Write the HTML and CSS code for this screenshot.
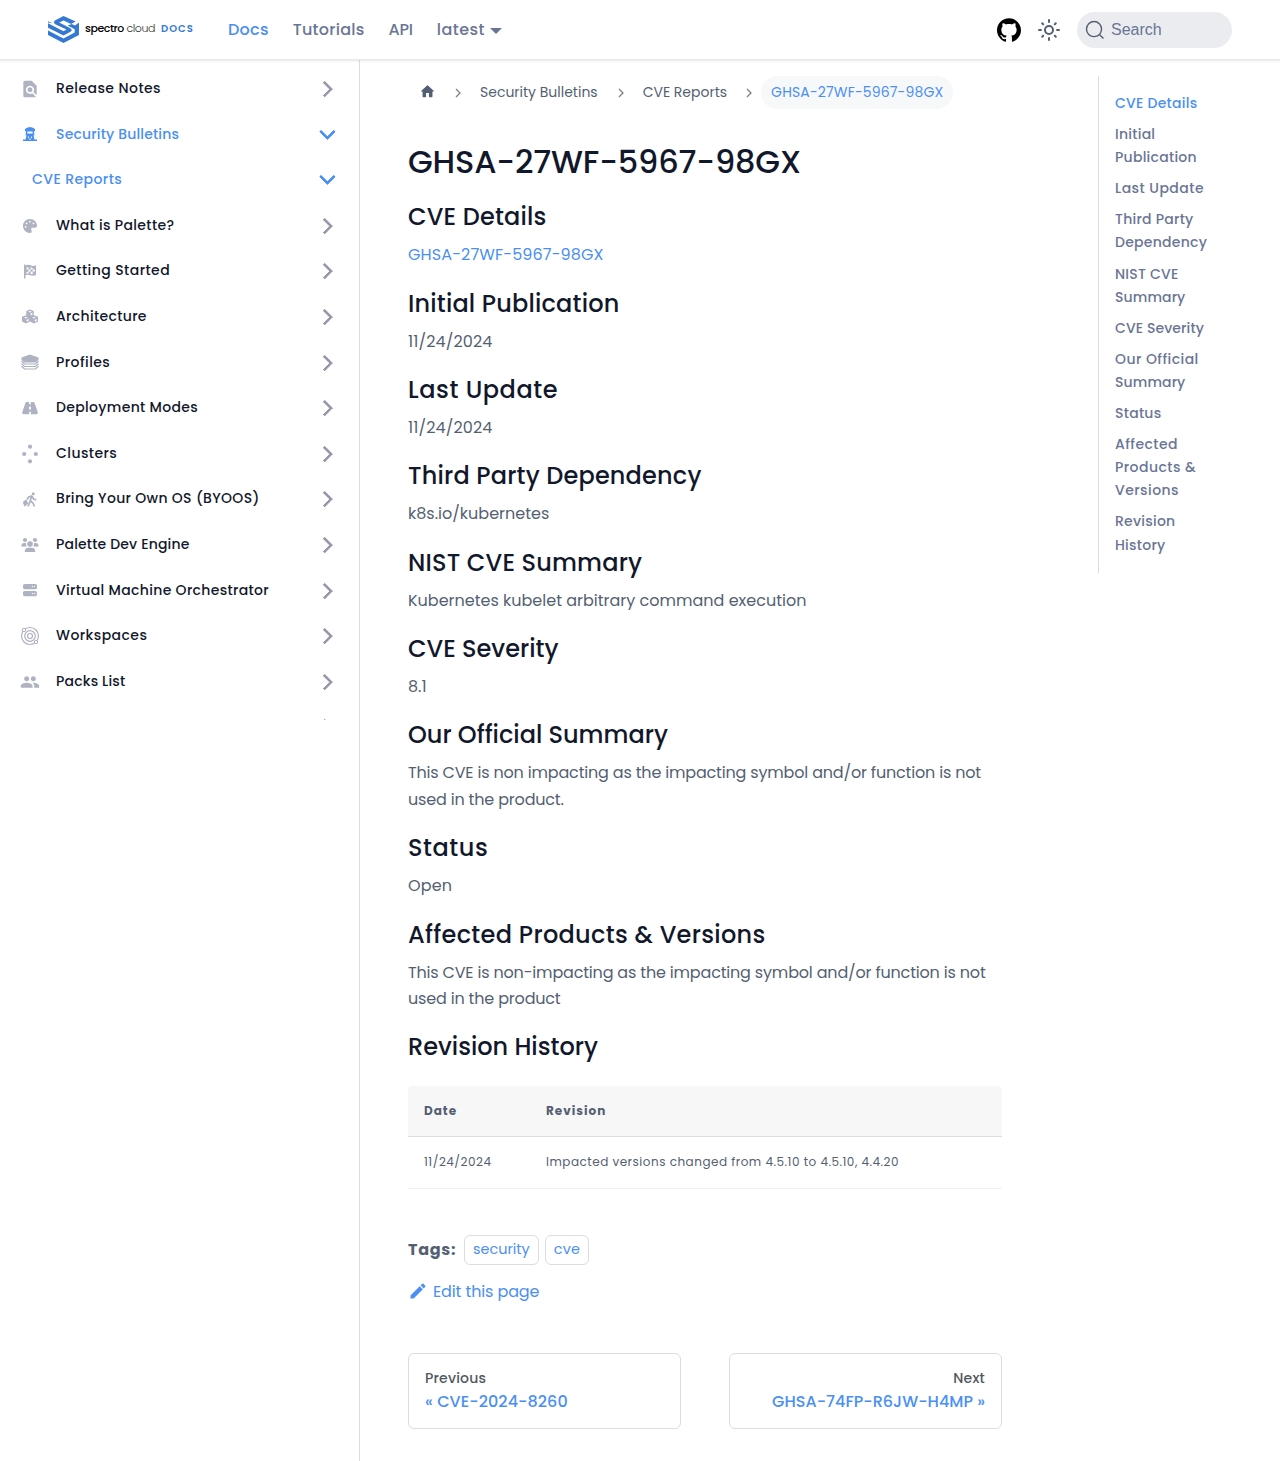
FILE: index.html
```html
<!DOCTYPE html>
<html lang="en">
<head>
<meta charset="utf-8">
<title>GHSA-27WF-5967-98GX | Spectro Cloud Docs</title>
<link rel="stylesheet" href="styles.css">
</head>
<body>
<header class="navbar">
  <a class="brand">
    <svg class="brand-mark" viewBox="0 0 94 82"><path fill="#3578d4" d="M47 0 84 17 70 24 47 14 34 20 68 37Q76 43 68 48L47 59 0 36V22L47 46 56 41 22 25Q14 19 22 13ZM0 16 14 22 0 20ZM94 20V58L47 82 0 58V44L47 68 81 50V40L60 29 72 24 82 29Z"/></svg>
    <span class="brand-name"><b>spectro</b> cloud</span><span class="brand-docs">DOCS</span>
  </a>
  <nav class="nav-links"><a class="active">Docs</a><a>Tutorials</a><a class="tight">API</a><a class="version">latest</a><i class="caret"></i></nav>
  <div class="nav-tools">
    <svg class="github" viewBox="0 0 24 24"><path d="M12 .297c-6.63 0-12 5.373-12 12 0 5.303 3.438 9.8 8.205 11.385.6.113.82-.258.82-.577 0-.285-.01-1.04-.015-2.04-3.338.724-4.042-1.61-4.042-1.61C4.422 18.07 3.633 17.7 3.633 17.7c-1.087-.744.084-.729.084-.729 1.205.084 1.838 1.236 1.838 1.236 1.07 1.835 2.809 1.305 3.495.998.108-.776.417-1.305.76-1.605-2.665-.3-5.466-1.332-5.466-5.93 0-1.31.465-2.38 1.235-3.22-.135-.303-.54-1.523.105-3.176 0 0 1.005-.322 3.3 1.23.96-.267 1.98-.399 3-.405 1.02.006 2.04.138 3 .405 2.28-1.552 3.285-1.23 3.285-1.23.645 1.653.24 2.873.12 3.176.765.84 1.23 1.91 1.23 3.22 0 4.61-2.805 5.625-5.475 5.92.42.36.81 1.096.81 2.22 0 1.606-.015 2.896-.015 3.286 0 .315.21.69.825.57C20.565 22.092 24 17.592 24 12.297c0-6.627-5.373-12-12-12"/></svg>
    <svg class="sun" viewBox="0 0 24 24"><circle cx="12" cy="12" r="4"/><path d="M12 2v2M12 20v2M2 12h2M20 12h2M5.2 5.2l1 1M17.8 17.8l1 1M5.2 18.8l1-1M17.8 6.2l1-1"/></svg>
    <div class="search"><svg viewBox="0 0 20 20"><path d="M14.386 14.386l4.088 4.088-4.088-4.088A7.533 7.533 0 1 1 3.733 3.733a7.533 7.533 0 0 1 10.653 10.653z"/></svg><span>Search</span></div>
  </div>
</header>
<div class="layout">
<aside class="sidebar"><ul class="menu">
  <li><svg viewBox="0 0 24 24"><path d="M20 19.59V8l-6-6H6c-1.1 0-1.99.9-1.99 2L4 20c0 1.1.89 2 1.99 2H18c.45 0 .85-.15 1.19-.4l-4.43-4.43c-.8.52-1.74.83-2.76.83-2.76 0-5-2.24-5-5s2.24-5 5-5 5 2.24 5 5c0 1.02-.31 1.96-.83 2.75L20 19.59zM9 13c0 1.66 1.34 3 3 3s3-1.34 3-3-1.34-3-3-3-3 1.34-3 3z"/></svg><span class="wide">Release Notes</span><i class="chev"></i></li>
  <li class="active"><svg viewBox="0 0 20 20"><path fill-rule="evenodd" d="M5 4 7 2.800 10 2l3 .8 2 1.200v2h-.8v4.500h-.6l.8 4H17V16H3v-1.500h2.600l.8-4h-.600V6H5ZM7.300 6.600v2h5.400v-2ZM8 11l1.200 1.200L8 13.500ZM12 11l-1.200 1.200L12 13.500ZM10 13.200 8.700 14.600h2.600Z"/></svg><span class="tight">Security Bulletins</span><i class="chev"></i></li>
  <li class="active child"><span class="wide">CVE Reports</span><i class="chev"></i></li>
  <li><svg class="s14" viewBox="0 0 512 512"><path d="M512 256c0 .9 0 1.800 0 2.700-.4 36.500-33.600 61.300-70.100 61.300H344c-26.500 0-48 21.500-48 48c0 3.400 .4 6.700 1 9.900c2.100 10.200 6.500 20 10.800 29.900c6.100 13.800 12.100 27.500 12.100 42c0 31.800-21.600 60.700-53.400 62c-3.500 .1-7 .2-10.600 .2C114.600 512 0 397.400 0 256S114.600 0 256 0S512 114.600 512 256zM128 288a32 32 0 1 0 -64 0 32 32 0 1 0 64 0zm0-96a32 32 0 1 0 0-64 32 32 0 1 0 0 64zM288 96a32 32 0 1 0 -64 0 32 32 0 1 0 64 0zm96 96a32 32 0 1 0 0-64 32 32 0 1 0 0 64z"/></svg><span>What is Palette?</span><i class="chev"></i></li>
  <li><svg viewBox="0 0 20 20"><path fill-rule="evenodd" d="M4 2.500h1.500v1C8 2.500 9.500 2.700 11 3.500c1.500.6 3 .5 5-.3V13c-2 1-4 1-5.500.3C9 12.600 7.500 12.600 5.500 13.200V16.500H4ZM6.500 5.500v2l2 .0v-2.300ZM8.500 7.500v2.300h2V7.500ZM10.500 5.300v2.200h2.200V5.900ZM12.700 7.500v2.300l2-.3v-2.300ZM6.500 9.800v2l2-.4v-1.600ZM10.500 9.800v2l2.200.5v-2.500Z"/></svg><span class="wide">Getting Started</span><i class="chev"></i></li>
  <li><svg viewBox="0 0 20 20"><path fill-rule="evenodd" d="M10 2.500l3.700 1.400v4.300L18 9.800v4.700l-4 2-4-2-4 2-4-2V9.800l4.300-1.600V3.900ZM10 3.900 8 4.700l2 .8 2-.8ZM10.700 6.500v2l1.800-.8V5.700ZM6 10l-2 .8 2 .8 2-.8ZM6.700 12.700v2l2-1v-1.800ZM14 10l-2 .8 2 .8 2-.8ZM14.700 12.700v2l2-1v-1.800Z"/></svg><span>Architecture</span><i class="chev"></i></li>
  <li><svg viewBox="0 0 20 20"><path d="M10 1.500 18.500 4.500v2.500L15.500 9.500h-11L1.500 7V4.500Z"/><path class="line" d="M1.500 8.300 4.500 11h11L18.500 8.300M1.500 10.800 4.500 13.500h11l3-2.700M1.500 13.300 4.500 16h11l3-2.700"/></svg><span class="wide">Profiles</span><i class="chev"></i></li>
  <li><svg class="s16" viewBox="0 0 576 512"><path d="M256 32H181.200c-27.100 0-51.300 17.100-60.300 42.600L3.100 407.200C1.100 413 0 419.200 0 425.500C0 455.500 24.500 480 54.500 480H256V416c0-17.700 14.300-32 32-32s32 14.300 32 32v64H521.500c30.200 0 54.500-24.500 54.500-54.500c0-6.300-1.100-12.500-3.100-18.300L455.100 74.600C446 49.100 421.900 32 394.800 32H320V96c0 17.700-14.300 32-32 32s-32-14.300-32-32V32zm64 192v64c0 17.700-14.300 32-32 32s-32-14.300-32-32V224c0-17.700 14.300-32 32-32s32 14.300 32 32z"/></svg><span>Deployment Modes</span><i class="chev"></i></li>
  <li><svg viewBox="0 0 20 20"><circle cx="10" cy="2.700" r="2.100"/><circle cx="4.200" cy="10" r="2.100"/><circle cx="15.800" cy="10" r="2.100"/><circle cx="10" cy="17.300" r="2.100"/></svg><span class="wide">Clusters</span><i class="chev"></i></li>
  <li><svg viewBox="0 0 20 20"><circle cx="13.300" cy="3.800" r="1.500"/><path d="m3.500 11 3-1.500 1.700 4-3.500 3.200L3 13Z"/><path class="line bold" d="M7 9.500 8.700 7l3-1 2 3 2.500 1M11.500 6.500l-1.500 5-2 5M10.500 11l2.500 2 1.500 3.500"/></svg><span>Bring Your Own OS (BYOOS)</span><i class="chev"></i></li>
  <li><svg viewBox="0 0 20 20"><circle cx="5" cy="5" r="2.100"/><circle cx="15" cy="5" r="2.100"/><circle cx="10" cy="9" r="2.800"/><path d="M1.300 11.500c0-2.500 1.200-3.500 3-3.500h1.800c-.3 1.500 0 2.500.7 3.500ZM18.700 11.500c0-2.500-1.200-3.500-3-3.500h-1.800c.3 1.500 0 2.500-.7 3.500ZM4.700 17c0-2.800 1.500-4.200 3.500-4.200h3.600c2 0 3.500 1.400 3.500 4.200Z"/></svg><span class="tight">Palette Dev Engine</span><i class="chev"></i></li>
  <li><svg class="s14 up" viewBox="0 0 512 512"><path fill-rule="evenodd" d="M64 32C28.700 32 0 60.700 0 96v64c0 35.300 28.700 64 64 64H448c35.300 0 64-28.700 64-64V96c0-35.300-28.700-64-64-64H64zm280 72a24 24 0 1 1 0 48 24 24 0 1 1 0-48zm48 24a24 24 0 1 1 48 0 24 24 0 1 1 -48 0zM64 288c-35.300 0-64 28.700-64 64v64c0 35.300 28.700 64 64 64H448c35.300 0 64-28.700 64-64V352c0-35.300-28.700-64-64-64H64zm280 72a24 24 0 1 1 0 48 24 24 0 1 1 0-48zm56 24a24 24 0 1 1 48 0 24 24 0 1 1 -48 0z"/></svg><span>Virtual Machine Orchestrator</span><i class="chev"></i></li>
  <li><svg viewBox="0 0 20 20"><g class="line"><circle cx="10" cy="10" r="8.500"/><circle cx="10" cy="10" r="5.300"/><circle cx="10" cy="10" r="2.500"/></g><circle class="dot" cx="4" cy="4" r="1.700"/><circle class="dot" cx="16" cy="16" r="1.700"/></svg><span class="wide">Workspaces</span><i class="chev"></i></li>
  <li><svg viewBox="0 0 24 24"><path d="M16 11c1.660 0 2.990-1.340 2.990-3S17.660 5 16 5c-1.660 0-3 1.340-3 3s1.340 3 3 3zm-8 0c1.660 0 2.990-1.340 2.990-3S9.660 5 8 5C6.340 5 5 6.340 5 8s1.340 3 3 3zm0 2c-2.330 0-7 1.170-7 3.500V19h14v-2.500c0-2.330-4.670-3.500-7-3.500zm8 0c-.29 0-.62.02-.97.05 1.160.84 1.970 1.970 1.970 3.450V19h6v-2.500c0-2.330-4.670-3.500-7-3.500z"/></svg><span class="tight">Packs List</span><i class="chev"></i></li>
  <li><span></span><i class="chev"></i></li>
</ul></aside>
<main class="content">
  <article>
    <nav class="crumbs">
      <svg class="home" viewBox="0 0 24 24"><path d="M10 19v-5h4v5c0 .55.45 1 1 1h3c.55 0 1-.45 1-1v-7h1.700c.46 0 .68-.57.33-.87L12.670 3.600c-.38-.34-.96-.34-1.340 0l-8.360 7.530c-.34.3-.13.87.33.87H5v7c0 .55.45 1 1 1h3c.55 0 1-.45 1-1z"/></svg>
      <svg class="sep" viewBox="0 0 8 10"><path d="m2 1 4 4-4 4"/></svg><span class="crumb">Security Bulletins</span>
      <svg class="sep" viewBox="0 0 8 10"><path d="m2 1 4 4-4 4"/></svg><span>CVE Reports</span>
      <svg class="sep" viewBox="0 0 8 10"><path d="m2 1 4 4-4 4"/></svg><span class="current">GHSA-27WF-5967-98GX</span>
    </nav>
    <h1>GHSA-27WF-5967-98GX</h1>
    <h2>CVE Details</h2><p class="loose"><a>GHSA-27WF-5967-98GX</a></p>
    <h2>Initial Publication</h2><p class="loose">11/24/2024</p>
    <h2 class="wide">Last Update</h2><p class="loose">11/24/2024</p>
    <h2>Third Party Dependency</h2><p>k8s.io/kubernetes</p>
    <h2>NIST CVE Summary</h2><p>Kubernetes kubelet arbitrary command execution</p>
    <h2 class="tight">CVE Severity</h2><p>8.1</p>
    <h2 class="tight">Our Official Summary</h2><p class="dense">This CVE is non impacting as the impacting symbol and/or function is not<br>used in the product.</p>
    <h2 class="wide">Status</h2><p class="loose">Open</p>
    <h2 class="semiwide">Affected Products &amp; Versions</h2><p class="dense">This CVE is non-impacting as the impacting symbol and/or function is not<br>used in the product</p>
    <h2 class="tight">Revision History</h2>
    <table><thead><tr><th>Date</th><th>Revision</th></tr></thead><tbody><tr><td>11/24/2024</td><td>Impacted versions changed from 4.5.10 to 4.5.10, 4.4.20</td></tr></tbody></table>
    <div class="tags"><b>Tags:</b><a>security</a><a class="loose">cve</a></div>
    <a class="edit"><svg viewBox="0 0 40 40"><path d="m34.500 11.700l-3 3.100-6.300-6.300 3.100-3q0.500-0.500 1.200-0.500t1.100 0.500l3.900 3.900q0.500 0.400 0.500 1.100t-0.500 1.200z m-29.500 17.100l18.400-18.500 6.300 6.300-18.400 18.400h-6.300v-6.200z"/></svg><span>Edit this page</span></a>
    <nav class="pager"><a><small>Previous</small><span>« CVE-2024-8260</span></a><a class="next"><small>Next</small><span>GHSA-74FP-R6JW-H4MP »</span></a></nav>
  </article>
  <ul class="toc">
    <li class="active">CVE Details</li><li>Initial<br>Publication</li><li class="wide">Last Update</li><li>Third Party<br>Dependency</li><li>NIST CVE<br><span class="tight">Summary</span></li><li class="tight">CVE Severity</li><li class="wide">Our Official<br><span class="tight">Summary</span></li><li>Status</li><li class="wide">Affected<br>Products &amp;<br>Versions</li><li>Revision<br>History</li>
  </ul>
</main>
</div>
</body>
</html>
```
FILE: styles.css
```css
* { box-sizing: border-box; }
body { margin: 0; background: #fff; color: #545f73; font: 400 16px/26.4px Poppins, Inter, "Open Sans", sans-serif; }
ul { list-style: none; margin: 0; padding: 0; }
p { margin: 0; line-height: 26.375px; }
a { color: #4a8ff3; }
.loose { letter-spacing: .12px; }
.dense { letter-spacing: -.18px; }

.navbar { position: relative; height: 60px; padding: 1px 48px 0; display: flex; align-items: center; background: #fff; border-bottom: 1px solid #e8e8e8; box-shadow: 0 1px 2px rgba(0,0,0,.1); }
.brand { display: flex; align-items: center; width: 180px; }
.brand-mark { width: 31px; height: 27px; margin-top: -1px; flex: none; }
.brand-name { margin: -3px 0 0 6px; width: 76px; flex: none; color: #333; font-size: 11px; font-weight: 300; letter-spacing: -.45px; white-space: nowrap; }
.brand-name b { color: #000; font-weight: 500; }
.brand-docs { margin-top: -2px; color: #3578d4; font-size: 10px; font-weight: 600; letter-spacing: 1px; }
.nav-links { display: flex; align-items: center; gap: 24px; font-weight: 500; letter-spacing: .25px; }
.nav-links a { color: #6a7595; }
.nav-links .active { color: #4a8ff3; }
.nav-links .tight { letter-spacing: -.200px; }
.nav-links .version { letter-spacing: .45px; }
.caret { margin: 2px 0 0 -19px; border: 6px solid transparent; border-top-color: #6a7595; border-bottom: 0; }
.nav-tools { margin-left: auto; display: flex; align-items: center; }
.github { width: 24px; height: 24px; margin-right: 16px; }
.sun { width: 24px; height: 24px; margin-right: 16px; fill: none; stroke: #545f73; stroke-width: 2; stroke-linecap: round; }
.search { width: 155px; height: 36px; padding-left: 8px; display: flex; align-items: center; gap: 6px; border-radius: 18px; background: #ebecf0; color: #6a7595; font-family: "Liberation Sans", Arial, sans-serif; }
.search svg { width: 20px; height: 20px; fill: none; stroke: #545f73; stroke-width: 1.400; }

.layout { display: flex; height: 1401px; }
.sidebar { width: 360px; border-right: 1px solid #dadde1; }
.menu { height: 660px; padding: 5.500px 23px 0 20px; overflow: hidden; color: #12182b; font-size: 14px; font-weight: 500; letter-spacing: .33px; }
.menu .wide { letter-spacing: .43px; }
.menu .tight { letter-spacing: .17px; }
.menu li { height: 45.600px; display: flex; align-items: center; }
.menu svg { width: 20px; height: 20px; margin-right: 16px; position: relative; top: 1px; fill: #aeb2c1; flex: none; }
.menu .s14 { width: 14px; height: 14px; margin: 0 19px 0 3px; }
.menu .s16 { width: 16px; height: 14px; margin: 0 18px 0 2px; }
.menu .up { top: 0; }
.menu .line { fill: none; stroke: #aeb2c1; stroke-width: 1.200; }
.menu .bold { stroke-width: 1.700; }
.menu .dot { fill: #fff; stroke: #aeb2c1; stroke-width: 1; }
.menu .active { color: #4a8ff3; }
.menu .active svg { fill: #4a8ff3; }
.menu .child { padding-left: 12px; }
.chev { width: 11.500px; height: 11.500px; margin: 1px 5.500px 0 auto; border: solid #9798ab; border-width: 3px 3px 0 0; border-radius: 1px; transform: rotate(45deg); }
.active .chev { border-color: #4a8ff3; transform: rotate(135deg); margin: -5px 2.500px 0 auto; }

.content { flex: 1; display: flex; justify-content: space-between; padding: 16px 48px 0; }
article { width: 594px; }
.crumbs { height: 33px; padding-left: 10px; display: flex; align-items: center; font-size: 14px; white-space: nowrap; }
.crumb { margin-right: 1px; }
.home { width: 17px; height: 17px; margin: -3px .500px 0; fill: #545f73; }
.sep { width: 8px; height: 10px; margin: 1px 18px 0; fill: none; stroke: #808080; stroke-width: 1.300; }
.current { height: 33px; padding: 0 10px; line-height: 33px; border-radius: 17px; background: #f7f8fa; color: #4a8ff3; margin-left: -10px; letter-spacing: .16px; }
h1, h2 { color: #12182b; font-weight: 500; }
h1 { margin: 33.141px 0 20px; font-size: 32px; line-height: 40px; letter-spacing: -.15px; }
h2 { margin: 20px 0 10px; font-size: 24px; line-height: 30px; letter-spacing: .18px; }
h2.wide { letter-spacing: .55px; }
h2.semiwide { letter-spacing: .3px; }
h2.tight { letter-spacing: 0; }
table { width: 594px; margin-top: 24px; table-layout: fixed; border-collapse: separate; border-spacing: 0; font-size: 12px; line-height: 20px; letter-spacing: .5px; }
th { width: 122px; height: 51px; padding: 0 16px; text-align: left; font-weight: 700; letter-spacing: 1px; background: #f7f7f7; border-bottom: 1px solid #dadde1; }
th:first-child { border-top-left-radius: 4px; }
th:last-child { width: auto; border-top-right-radius: 4px; }
td { height: 52px; padding: 0 16px 1px; border-bottom: 1px solid #f0f0f0; }
.tags { height: 30px; margin-top: 46px; display: flex; align-items: center; gap: 6px; }
.tags b { width: 50px; margin-top: -1px; white-space: nowrap; letter-spacing: .7px; }
.tags a { height: 30px; padding: 0 8px; line-height: 27px; font-size: 14.400px; border: 1px solid #dadde1; border-radius: 6px; }
.tags .loose { letter-spacing: .3px; }
.edit { display: flex; align-items: center; gap: 5px; margin-top: 13px; letter-spacing: -.12px; }
.edit span { padding-top: 1px; }
.edit svg { width: 20px; height: 20px; margin-top: -1px; fill: #4a8ff3; }
.pager { margin-top: 47px; display: grid; grid-template-columns: 1fr 1fr; gap: 48px; }
.pager a { height: 76px; padding: 13px 16px; border: 1px solid #dadde1; border-radius: 6px; font-weight: 500; line-height: 24px; white-space: nowrap; }
.pager small, .pager span { display: block; letter-spacing: .08px; }
.pager small { font-size: 14px; line-height: 23px; color: #525860; letter-spacing: .2px; }
.pager .next { text-align: right; }
.pager .next span { letter-spacing: .03px; }
.toc { width: 134px; height: 497px; padding: 16px; border-left: 1px solid #dadde1; color: #6a7595; font-size: 14px; line-height: 23.100px; font-weight: 500; letter-spacing: .25px; white-space: nowrap; }
.toc .wide { letter-spacing: .45px; }
.toc .tight { letter-spacing: .1px; }
.toc li { margin-bottom: 8px; }
.toc .active { color: #4a8ff3; }
```
